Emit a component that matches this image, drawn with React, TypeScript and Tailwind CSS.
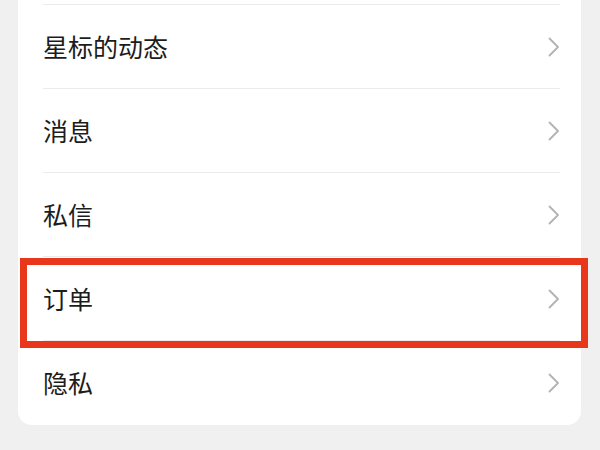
const items = ['星标的动态', '消息', '私信', '订单', '隐私'];

function Chevron() {
  return (
    <svg width="12" height="20" viewBox="0 0 12 20" fill="none" className="text-[#b3b3b3]">
      <polyline
        points="1.5,1.5 10,10 1.5,18.5"
        stroke="currentColor"
        strokeWidth="1.8"
        strokeLinecap="round"
        strokeLinejoin="round"
      />
    </svg>
  );
}

export default function App() {
  return (
    <div
      className="w-[600px] h-[450px] bg-[#f0f0f0] overflow-hidden"
      style={{ fontFamily: '"Noto Sans CJK SC", "Noto Sans", sans-serif' }}
    >
      <div className="relative ml-[18px] w-[563px] bg-white rounded-b-[14px] pl-[25px] pr-[21px] pt-[4px] pb-[1px]">
        {items.map((label) => (
          <div
            key={label}
            className="flex items-center justify-between h-[84px] border-t border-[#ebebeb]"
          >
            <span className="text-[25px] leading-none text-[#1c1c1c]">{label}</span>
            <Chevron />
          </div>
        ))}
        <div className="absolute left-[2px] top-[258px] w-[568px] h-[90px] border-[7px] border-[#e9371c]" />
      </div>
    </div>
  );
}
